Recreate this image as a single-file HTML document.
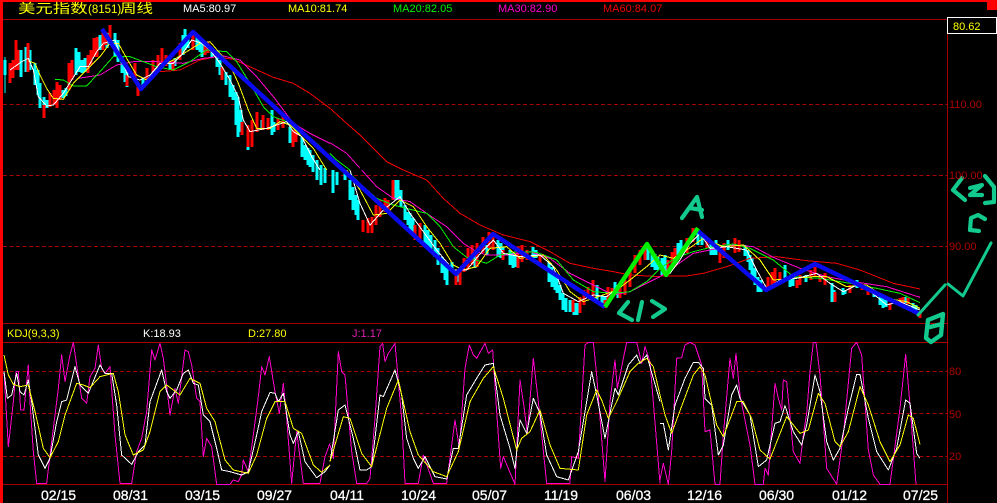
<!DOCTYPE html>
<html lang="zh"><head><meta charset="utf-8"><title>美元指数周线</title>
<style>
html,body{margin:0;padding:0;background:#000;width:997px;height:503px;overflow:hidden}
svg{display:block;position:absolute;left:0;top:0}
text{font-family:"Liberation Sans","Noto Sans CJK SC",sans-serif;font-size:11px}
polyline{fill:none;vector-effect:non-scaling-stroke;stroke-linejoin:round}
.w polyline{stroke:#fff}.y polyline{stroke:#ff0}.g polyline{stroke:#00f000}.m polyline{stroke:#ff00cc}.r polyline{stroke:#f00000}
.t{fill:none;stroke:#12c98e;stroke-width:4.2;stroke-linecap:round;stroke-linejoin:round}
.d{font-size:14px;fill:#fff;stroke:#fff;stroke-width:.3}
</style></head><body>
<svg width="997" height="503" viewBox="0 0 997 503">
<rect width="997" height="503" fill="#000"/>
<g shape-rendering="crispEdges">
<rect x="0" y="0" width="997" height="2" fill="#f00"/>
<rect x="0" y="0" width="3" height="503" fill="#f00"/>
<rect x="987" y="0" width="10" height="10" fill="#f00"/>
<g stroke="#a80000" fill="none">
<path d="M3 19.5H947M3 323.5H947M3 342.5H947M3 484.5H947M947.5 19V503"/>
<path stroke-dasharray="4 2.5" d="M3 104.5H947M3 175.5H947M3 246.5H947M3 371.5H947M3 413.5H947M3 456.5H947"/>
</g>
<rect x="947.5" y="17.5" width="49" height="16" fill="#000" stroke="#fff"/>

<!-- candles -->
<path fill="none" stroke="#00ffff" stroke-width="1" d="M5 57V93"/>
<path fill="none" stroke="#00ffff" stroke-width="3" d="M5 60V75M21 50V77M26 47V72M30 50V70M35 63V85M38 70V95M40 83V108M44 97V118M47 100V108M63 90V98M66 88V96M76 48V75M79 52V72M82 60V73M85 58V72M100 35V50M107 33V48M115 33V57M118 40V62M122 57V73M125 65V82M127 72V87M143 78V85M170 62V70M175 58V66M183 35V55M185 29V50M188 35V48M197 36V50M200 40V52M202 42V57M212 48V58M217 53V67M220 60V75M226 72V85M230 75V97M233 85V100M236 92V125M238 97V137M241 110V132M248 130V150M262 120V128M272 110V135M274 122V132M290 127V143M302 137V157M305 145V160M308 148V165M310 150V167M313 155V172M317 160V180M321 165V185M325 168V183M333 170V193M337 172V185M345 173V180M350 180V200M353 187V210M356 195V215M358 200V220M368 222V230M396 180V200M398 180V200M401 190V207M405 205V220M408 212V225M410 213V233M413 218V232M425 225V245M428 230V250M431 235V252M435 240V257M438 248V265M442 257V273M445 262V280M447 267V285M452 262V272M457 272V282M475 255V268M487 245V255M498 240V257M501 243V258M503 247V260M510 250V265M513 253V268M516 255V267M533 247V260M536 250V258M549 262V282M552 267V287M555 272V290M557 277V293M560 285V300M563 293V310M566 298V312M570 300V312M574 303V315M577 303V315M597 285V300M602 296V306M605 297V308M615 282V295M618 285V298M648 247V260M652 250V267M655 254V270M658 257V270M662 258V275M665 255V275M678 243V255M681 240V252M698 232V245M702 235V245M711 243V255M713 245V255M716 240V255M728 240V250M745 245V256M748 250V262M750 255V270M752 258V278M755 268V285M758 277V292M761 280V292M785 265V278M790 278V287M793 278V286M806 275V282M832 283V302M834 290V300M843 288V295M845 290V294M857 280V288M874 290V297M880 295V305M883 298V308M886 300V307M905 297V303M913 303V312M916 305V313"/>
<path fill="none" stroke="#ff0000" stroke-width="3" d="M10 63V83M13 60V78M16 40V70M18 50V70M28 43V72M44 105V118M50 93V107M54 90V105M57 82V108M60 85V100M69 63V90M72 60V80M88 55V73M91 50V65M94 38V57M97 37V57M103 30V50M106 32V45M110 25V43M127 75V86M135 63V80M138 83V96M147 68V83M153 60V75M158 55V70M162 48V68M166 55V66M173 60V70M180 43V60M193 32V50M205 45V55M208 42V53M222 67V80M242 122V135M248 125V147M252 120V147M257 112V132M263 115V130M268 118V130M278 118V130M283 113V128M293 130V147M296 130V142M363 220V232M368 218V233M372 217V233M376 205V225M380 200V217M385 198V212M388 200V213M393 180V200M415 225V240M420 223V240M456 272V285M460 270V285M464 258V272M468 248V270M472 245V265M477 243V267M483 237V253M489 232V248M493 232V250M503 250V260M518 247V268M522 245V262M527 250V260M540 255V265M573 300V312M580 297V313M584 290V305M588 287V298M593 280V297M605 300V308M608 287V303M612 288V298M620 285V298M625 280V295M630 267V287M635 255V273M640 250V265M645 245V260M668 260V275M672 252V270M675 248V267M687 238V253M693 228V242M707 237V248M720 250V263M724 243V258M735 238V253M739 240V252M768 277V290M772 272V285M775 268V283M780 272V282M797 280V288M800 275V285M811 270V280M815 267V277M820 275V282M825 273V285M835 292V302M850 285V293M862 284V290M868 287V295M890 303V310M900 298V305M903 297V305M908 298V304M920 313V318"/>

<!-- price MAs, coordinates are in 3x crop space -->
<g class="r" transform="translate(0,0) scale(.33333)"><polyline points="480,215 540,210 600,180 650,170 700,178 760,205 820,232 880,250 930,280 990,325"/></g>
<g class="r" transform="translate(330,0) scale(.33333)"><polyline points="0,325 50,370 90,405 130,445 170,485 220,510"/></g>
<g class="r" transform="translate(330,170) scale(.33333)"><polyline points="220,0 290,30 340,85 390,130 450,165 520,195 600,215 660,245 720,280 790,295 850,305 900,315 990,320"/></g>
<g class="r" transform="translate(660,170) scale(.33333)"><polyline points="0,318 80,318 130,310 200,290 270,265 350,260 440,272 530,280 600,300 700,340 780,357"/></g>

<g class="m" transform="translate(0,0) scale(.33333)"><polyline points="235,235 300,225 350,195 400,185 470,185 550,190 610,175 670,168 720,180 770,230 820,290 880,370 930,400 990,430"/></g>
<g class="m" transform="translate(330,0) scale(.33333)"><polyline points="0,428 50,460 90,505"/></g>
<g class="m" transform="translate(330,170) scale(.33333)"><polyline points="95,0 140,50 190,85 240,95 290,130 350,170 400,220 440,245 470,255 530,255 600,245 660,265 720,310 790,345 850,375 900,365 950,340 990,320"/></g>
<g class="m" transform="translate(660,170) scale(.33333)"><polyline points="0,320 50,285 100,250 150,240 220,225 280,230 340,262 420,295 500,320 580,335 680,350 780,382"/></g>

<g class="g" transform="translate(0,0) scale(.33333)"><polyline points="165,238 190,240 220,258 260,258 300,215 340,170 390,170 430,185 470,200 520,210 570,185 620,150 680,155 710,185 750,250 790,320 820,350 860,365 900,400 950,430 990,470"/></g>
<g class="g" transform="translate(330,0) scale(.33333)"><polyline points="0,460 20,480 60,510"/></g>
<g class="g" transform="translate(330,170) scale(.33333)"><polyline points="60,10 100,50 140,85 190,105 240,118 290,130 330,170 370,230 410,262 470,280 510,255 560,245 620,247 680,270 730,330 790,365 850,370 900,365 950,335 990,295"/></g>
<g class="g" transform="translate(660,170) scale(.33333)"><polyline points="0,295 50,262 100,245 160,230 220,222 270,235 340,270 400,320 480,325 570,340 650,355 720,370 780,398"/></g>

<g class="y" transform="translate(0,0) scale(.33333)"><polyline points="85,183 105,190 120,225 140,265 160,295 190,298 220,250 260,210 300,170 330,130 355,130 380,175 410,225 440,240 470,205 520,180 560,155 600,130 630,125 660,160 690,195 715,250 745,330 770,385 810,385 840,365 870,375 900,405 940,445 980,510"/></g>
<g class="y" transform="translate(330,170) scale(.33333)"><polyline points="50,0 90,60 130,135 170,130 210,90 250,110 290,170 330,220 370,285 400,300 440,290 480,235 530,230 570,265 640,255 680,300 720,365 760,395 810,378 860,360 900,330 950,290 990,255"/></g>
<g class="y" transform="translate(660,170) scale(.33333)"><polyline points="0,255 40,265 80,240 130,205 190,230 250,225 300,270 340,330 400,325 460,320 500,320 560,350 620,345 680,385 740,395 780,415"/></g>

<g class="w" transform="translate(0,0) scale(.33333)"><polyline points="30,210 65,185 85,175 100,210 115,290 140,318 160,315 190,280 215,240 240,200 265,200 290,155 310,130 345,120 365,180 385,230 420,240 450,225 480,190 520,190 545,165 575,120 605,130 630,150 660,190 690,240 715,290 730,360 750,395 775,390 800,385 830,375 860,365 880,395 905,410 935,470 960,510"/></g>
<g class="w" transform="translate(330,170) scale(.33333)"><polyline points="60,0 90,100 120,165 160,120 210,80 240,130 280,185 320,240 370,300 410,300 460,240 490,210 520,250 570,260 630,255 670,290 700,370 745,395 790,375 830,380 870,350 910,290 950,230 990,290"/></g>
<g class="w" transform="translate(660,170) scale(.33333)"><polyline points="0,290 30,310 60,270 90,220 120,190 150,235 200,230 260,240 290,300 320,355 360,330 410,325 470,310 510,340 550,365 600,340 650,380 680,405 720,395 780,420"/></g>
</g>

<!-- wave lines -->
<polyline style="vector-effect:none" points="102,29 141,89 193,32 456,274 493,234 605,307" stroke="#0a0af0" stroke-width="4.4"/>
<polyline style="vector-effect:none" points="698,231 766,290 815,264 920,314" stroke="#0a0af0" stroke-width="4.4"/>
<polyline style="vector-effect:none" points="605,307 647,244 666,275 698,228" stroke="#00f000" stroke-width="4.4"/>

<!-- hand annotations -->
<g class="t">
<path d="M682 218L697 197L702 217M690 208L702 210"/>
<path d="M628 302L619 313L632 320M642 302L638 320M652 301L665 309L653 317"/>
<path d="M965 200L953 190L962 178M970 188L982 185L970 195H982M985 176L994 187V202L985 203"/>
<path d="M985 219L978 215L971 218L970 230L979 231"/>
<path d="M928 320L943 314L942 324L930 327M928 320L926 338L931 342L941 335L942 324" stroke-width="4.4"/>
<path d="M918 315L945 285M948 284L963 296L991 243" stroke-width="3"/>
</g>

<!-- text -->
<text transform="translate(18,13) scale(1.34,1)" fill="#ff0" style="font-size:13px">美元指数</text>
<text x="88" y="13" fill="#ff0" style="font-size:11.5px">(8151)</text>
<text transform="translate(120,13) scale(1.27,1)" fill="#ff0" style="font-size:13px">周线</text>
<text x="183" y="12" fill="#fff">MA5:80.97</text>
<text x="288" y="12" fill="#ff0">MA10:81.74</text>
<text x="393" y="12" fill="#00f000">MA20:82.05</text>
<text x="498" y="12" fill="#ff00cc">MA30:82.90</text>
<text x="603" y="12" fill="#f00000">MA60:84.07</text>
<text x="953" y="30" fill="#ff0">80.62</text>
<g fill="#b00000">
<text x="949" y="108">110.00</text>
<text x="949" y="179">100.00</text>
<text x="949" y="250">90.00</text>
<text x="949" y="375">80</text>
<text x="949" y="418">50</text>
<text x="949" y="460">20</text>
</g>
<text x="7" y="337" fill="#ff0">KDJ(9,3,3)</text>
<text x="143" y="337" fill="#fff">K:18.93</text>
<text x="248" y="337" fill="#ff0">D:27.80</text>
<text x="352" y="337" fill="#e020b0">J:1.17</text>

<!-- KDJ -->
<g shape-rendering="crispEdges">
<g class="m" transform="translate(0,335) scale(.33333)"><polyline points="12,110 25,335 40,200 48,110 55,110 62,225 72,225 85,90 90,200 100,350 110,445 140,445 155,320 175,160 185,60 195,140 210,60 220,22 230,90 245,190 260,205 270,125 285,100 295,30 305,100 315,115 330,95 345,300 360,445 395,445 410,350 425,310 440,230 455,45 465,75 480,25 490,70 495,110 510,240 525,160 535,205 555,45 565,50 575,90 590,190 600,200 610,365 620,310 635,335 650,448 690,448 700,435 715,440 725,420 730,375 745,410 760,300 775,185 785,95 795,120 808,65 825,170 838,235 850,145 860,250 875,445 890,290 910,445 960,445 975,365 990,325"/></g>
<g class="m" transform="translate(330,335) scale(.33333)"><polyline points="0,330 10,370 25,50 35,110 45,120 65,350 80,445 110,445 120,430 135,250 150,35 158,25 165,80 175,55 195,25 215,250 225,445 265,445 280,360 310,445 350,445 375,255 388,340 405,100 418,30 430,60 440,70 465,25 475,55 488,45 500,230 512,400 520,365 555,448 570,135 582,215 592,295 610,70 625,200 650,445 720,445 725,365 745,370 765,30 775,22 790,22 800,120 825,440 840,200 855,75 862,160 890,22 920,22 935,85 945,35 960,80 990,445"/></g>
<g class="m" transform="translate(660,335) scale(.33333)"><polyline points="0,435 10,385 25,448 35,350 50,70 65,68 75,30 90,22 105,30 125,90 135,290 150,285 165,448 180,448 190,300 210,70 220,130 228,55 240,180 270,330 285,448 310,448 315,400 325,420 345,145 355,190 365,225 370,135 380,140 400,350 420,385 430,300 440,235 450,110 460,22 468,22 480,120 500,400 530,448 550,300 575,40 590,22 605,60 625,345 640,420 660,448 690,448 720,220 737,58 750,210 768,448"/></g>

<g class="w" transform="translate(0,335) scale(.33333)"><polyline points="12,110 22,190 35,180 50,115 60,170 72,180 85,135 95,200 115,360 135,400 150,370 170,260 185,200 200,195 225,95 240,150 265,175 300,90 315,115 335,115 350,210 365,360 395,388 415,350 435,330 450,200 485,105 500,170 510,190 530,165 550,115 565,105 580,145 595,150 610,240 630,260 650,340 665,405 690,410 725,420 745,410 770,300 785,230 810,172 825,175 835,200 850,175 870,300 880,325 895,290 915,380 950,428 975,410 990,390"/></g>
<g class="w" transform="translate(330,335) scale(.33333)"><polyline points="0,380 25,225 45,210 70,310 90,405 110,405 125,395 150,180 160,185 195,105 215,180 230,310 250,370 265,400 285,365 315,425 350,432 370,340 385,340 410,180 440,130 465,90 490,85 510,240 540,340 555,400 570,255 590,295 610,190 630,235 650,360 680,425 715,435 745,350 785,110 800,180 825,310 855,160 865,180 895,90 920,60 930,85 950,60 990,200"/></g>
<g class="w" transform="translate(660,335) scale(.33333)"><polyline points="0,265 10,265 25,345 45,210 75,130 100,82 115,82 130,100 135,190 155,210 175,360 190,330 215,180 230,150 240,190 270,240 295,395 320,375 345,265 360,260 375,212 400,290 425,330 440,270 465,120 480,170 500,320 520,375 540,340 565,220 590,118 600,118 625,250 650,350 685,405 710,340 737,195 750,205 770,355 780,370"/></g>

<g class="y" transform="translate(0,335) scale(.33333)"><polyline points="12,60 25,120 40,148 60,155 85,150 105,230 130,340 150,368 175,320 195,240 230,145 250,150 270,158 300,125 340,115 355,170 375,300 400,360 430,345 450,290 480,170 500,150 540,180 570,130 600,145 620,220 645,260 675,375 700,405 745,415 770,360 800,250 825,200 855,200 880,280 905,295 940,390 965,412 990,390"/></g>
<g class="y" transform="translate(330,335) scale(.33333)"><polyline points="0,380 40,245 60,250 95,355 125,395 170,220 205,135 240,290 265,360 310,410 350,425 385,350 420,200 460,130 490,95 520,190 560,345 575,310 600,290 630,225 660,330 690,400 745,405 770,240 800,165 815,195 835,250 860,200 900,110 925,85 950,70 970,95 990,180"/></g>
<g class="y" transform="translate(660,335) scale(.33333)"><polyline points="0,180 15,240 35,295 70,200 100,120 120,95 135,120 170,270 190,305 230,200 250,200 275,250 300,345 330,372 380,245 420,295 445,285 475,175 495,205 525,320 540,335 565,290 600,155 625,210 660,320 690,380 720,330 745,240 760,250 780,328"/></g>
</g>

<!-- dates -->
<text class="d" x="41" y="500">02/15</text>
<text class="d" x="113" y="500">08/31</text>
<text class="d" x="185" y="500">03/15</text>
<text class="d" x="257" y="500">09/27</text>
<text class="d" x="330" y="500">04/11</text>
<text class="d" x="401" y="500">10/24</text>
<text class="d" x="472" y="500">05/07</text>
<text class="d" x="544" y="500">11/19</text>
<text class="d" x="616" y="500">06/03</text>
<text class="d" x="687" y="500">12/16</text>
<text class="d" x="759" y="500">06/30</text>
<text class="d" x="832" y="500">01/12</text>
<text class="d" x="903" y="500">07/25</text>
</svg>
</body></html>
